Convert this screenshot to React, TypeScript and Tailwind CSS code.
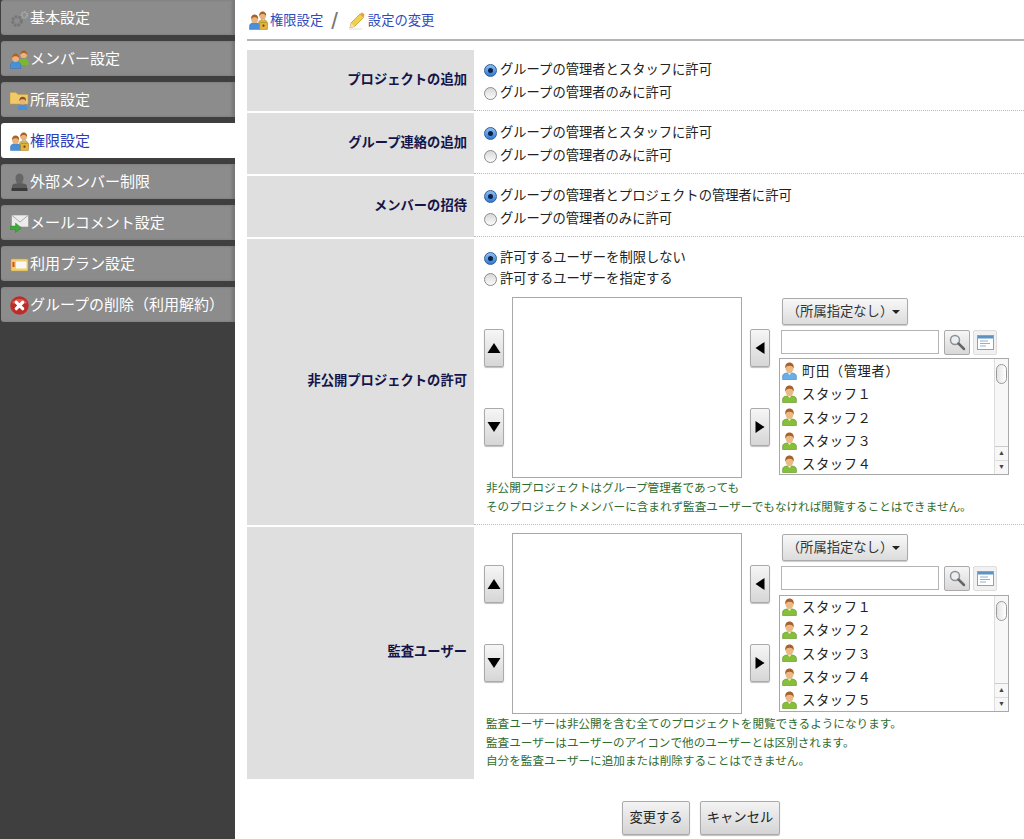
import React from "react";

const fontStack = "font-['Liberation_Sans','Noto_Sans_CJK_JP',sans-serif]";

function Person({ shirt = "#86bf3a", edge = "#5c8f22" }: { shirt?: string; edge?: string }) {
  return (
    <svg width="15" height="18" viewBox="0 0 15 18" className="mt-[-2px] shrink-0">
      <path d="M.6 17.500v-3.200c0-2.400 2.600-3.500 6.900-3.500s6.900 1.100 6.900 3.500v3.200z" fill={shirt} stroke={edge} strokeWidth="0.600" />
      <path d="M5.300 10.600h4.400l-2.200 2.400z" fill="#f6ead4" />
      <ellipse cx="7.500" cy="6" rx="4" ry="4.900" fill="#eab984" />
      <path d="M3.300 6.400C2.700 2.400 4.900.4 7.500.4s4.800 2 4.200 6C10.800 4.300 9.300 3.700 7.500 3.800c-1.800-.1-3.300.5-4.200 2.600z" fill="#a8612a" />
    </svg>
  );
}

function GroupIcon({ lock = false }: { lock?: boolean }) {
  return (
    <svg width="19" height="19" viewBox="0 0 19 19" className="shrink-0">
      <path d="M9 11.500c0-2 2-3 4.700-3s4.800 1 4.800 3V15H9z" fill={lock ? "#d9b24a" : "#7ab832"} />
      <circle cx="13.700" cy="4.700" r="3.400" fill="#e9b47c" />
      <path d="M10.400 4.900c-.5-3 1.400-4.500 3.300-4.500s3.800 1.500 3.300 4.500c-.8-1.500-1.900-1.900-3.300-1.900s-2.500.4-3.300 1.900z" fill="#a8612a" />
      <path d="M.4 18.500v-3.300c0-2.400 2.500-3.600 5.200-3.600s5.200 1.200 5.200 3.600v3.300z" fill="#4a90d9" stroke="#2d6bb0" strokeWidth="0.400" />
      <ellipse cx="5.600" cy="8" rx="3.500" ry="3.900" fill="#e9b47c" />
      <path d="M2.100 8.200C1.700 5 3.500 3.400 5.600 3.400s3.900 1.600 3.500 4.800C8.300 6.700 7.100 6.200 5.600 6.200s-2.700.5-3.500 2z" fill="#a8612a" />
      {lock && (
        <g>
          <path d="M12 11.500V10a2.200 2.200 0 0 1 4.400 0v1.500" fill="none" stroke="#b5ad8d" strokeWidth="1" />
          <rect x="10.500" y="11.500" width="8" height="7" rx="0.500" fill="#e3b23c" stroke="#a57b1c" strokeWidth="0.500" />
          <circle cx="14.500" cy="14.700" r="1.100" fill="#5d4410" />
        </g>
      )}
    </svg>
  );
}

function GearIcon() {
  return (
    <svg width="19" height="18" viewBox="0 0 19 18" className="shrink-0">
      <circle cx="7" cy="11" r="4.300" fill="none" stroke="#767676" strokeWidth="3" strokeDasharray="2.500 1" />
      <circle cx="14.500" cy="5" r="2.800" fill="none" stroke="#a9a9a9" strokeWidth="1.800" strokeDasharray="1.800 0.700" />
    </svg>
  );
}

function FolderIcon() {
  return (
    <svg width="19" height="19" viewBox="0 0 19 19" className="shrink-0">
      <path d="M0 1.500h6l2 2h10V13H0z" fill="#f0c968" stroke="#c99b3a" strokeWidth="0.500" />
      <path d="M8 19v-2c0-2.200 2-3.300 4.700-3.300s4.700 1.100 4.700 3.300v2z" fill="#4a90d9" />
      <ellipse cx="12.700" cy="10" rx="3.300" ry="3.600" fill="#e9b47c" />
      <path d="M9.400 10c-.4-2.800 1.300-4.300 3.300-4.300s3.700 1.500 3.300 4.300c-.8-1.300-1.900-1.700-3.300-1.700s-2.500.4-3.300 1.700z" fill="#8a5324" />
    </svg>
  );
}

function StampIcon() {
  return (
    <svg width="19" height="19" viewBox="0 0 19 19" className="shrink-0">
      <path d="M5.500 5c0-6 8-6 8 0 0 3-1.300 4-1.300 6H6.800c0-2-1.300-3-1.300-6z" fill="#666" />
      <path d="M2 13c0-1.500 2-2.500 4-2.500h7c2 0 4 1 4 2.500v2H2z" fill="#5c5c5c" />
      <rect x="1.500" y="15" width="16" height="3" fill="#3a3a3a" />
    </svg>
  );
}

function MailIcon() {
  return (
    <svg width="19" height="19" viewBox="0 0 19 19" className="shrink-0">
      <rect x="1.500" y="1" width="17" height="12" fill="#ececec" stroke="#8f8f8f" strokeWidth="0.600" />
      <path d="M1.500 1l8.500 7 8.500-7" fill="none" stroke="#9a9a9a" strokeWidth="0.800" />
      <path d="M0 12h5.500V9l6 4.800-6 4.800v-3H0z" fill="#3fa83a" stroke="#2a7d27" strokeWidth="0.400" />
    </svg>
  );
}

function PlanIcon() {
  return (
    <svg width="19" height="18" viewBox="0 0 19 18" className="shrink-0">
      <rect x="1" y="3" width="17" height="12" rx="1" fill="#f0cf6c" stroke="#c99b3a" strokeWidth="0.500" />
      <rect x="6" y="5.500" width="10.500" height="7" fill="#f7f7f7" />
      <rect x="2.500" y="6" width="2" height="5" fill="#d84a2a" />
    </svg>
  );
}

function RemoveIcon() {
  return (
    <svg width="19" height="19" viewBox="0 0 19 19" className="shrink-0">
      <circle cx="9.500" cy="9.500" r="9.200" fill="#bf2b27" />
      <path d="M2 7a8 6 0 0 1 15 0c-4 1.500-11 1.500-15 0z" fill="#de5a50" />
      <path d="M6.300 6.300l6.400 6.400M12.700 6.300l-6.400 6.400" stroke="#fff" strokeWidth="3.200" strokeLinecap="round" />
    </svg>
  );
}

function PencilIcon() {
  return (
    <svg width="17" height="18" viewBox="0 0 17 18" className="shrink-0">
      <path d="M3 11L12 2l3.500 3.500-9 9L2 16z" fill="#f2d04a" stroke="#b9932a" strokeWidth="0.700" />
      <path d="M12 2l1-1c.6-.5 1.400-.5 2 0l1 1c.5.600.5 1.400 0 2l-.5 1.500z" fill="#e9a23b" />
      <path d="M3 11l3.500 3.500L2 16z" fill="#f3dfb8" />
      <rect x="1" y="16.500" width="13" height="1" fill="#ddd" />
    </svg>
  );
}

const navItems = [
  { label: "基本設定", icon: <GearIcon /> },
  { label: "メンバー設定", icon: <GroupIcon /> },
  { label: "所属設定", icon: <FolderIcon /> },
  { label: "権限設定", icon: <GroupIcon lock />, active: true },
  { label: "外部メンバー制限", icon: <StampIcon /> },
  { label: "メールコメント設定", icon: <MailIcon /> },
  { label: "利用プラン設定", icon: <PlanIcon /> },
  { label: "グループの削除（利用解約）", icon: <RemoveIcon /> },
];

function Radio({ checked, label }: { checked?: boolean; label: string }) {
  return (
    <label className="flex items-center gap-[3px] text-[13.3px] leading-[18px] text-[#222]">
      <span
        className={
          checked
            ? "flex h-[13px] w-[13px] items-center justify-center rounded-full border border-[#2a5f9e] bg-gradient-to-b from-[#8fbdf0] to-[#2f7bd6]"
            : "h-[13px] w-[13px] rounded-full border border-[#8b8b8b] bg-gradient-to-b from-[#d8d8d8] to-[#fbfbfb]"
        }
      >
        {checked && <span className="h-[5px] w-[5px] rounded-full bg-[#0b2346]" />}
      </span>
      {label}
    </label>
  );
}

function ArrowButton({ dir }: { dir: "up" | "down" | "left" | "right" }) {
  const points = {
    up: "8,3 14.500,13 1.500,13",
    down: "1.500,3 14.500,3 8,13",
    left: "12.500,2 12.500,14 3.500,8",
    right: "3.500,2 3.500,14 12.500,8",
  }[dir];
  return (
    <button className="flex h-[38px] w-[20px] items-center justify-center rounded-[2px] border border-[#aaa] bg-gradient-to-b from-[#f6f6f6] to-[#d6d6d6] shadow-[0_1px_1px_rgba(0,0,0,0.25)]">
      <svg width="16" height="16" viewBox="0 0 16 16">
        <polygon points={points} fill="#000" />
      </svg>
    </button>
  );
}

function UserList({
  users,
  rowsClass,
}: {
  users: { name: string; admin?: boolean }[];
  rowsClass: string;
}) {
  return (
    <div className="relative ml-[-2px] h-[117px] w-[230px] overflow-hidden border border-[#a8a8a8] bg-white">
      <div className={`flex flex-col pl-[2px] ${rowsClass}`}>
        {users.map((u) => (
          <div key={u.name} className="flex h-[23.4px] items-center gap-[5px] text-[13.3px] text-[#222]">
            <Person shirt={u.admin ? "#6aaee8" : "#86bf3a"} edge={u.admin ? "#3d7fc0" : "#5c8f22"} />
            <span className="tracking-[0.6px]">{u.name}</span>
          </div>
        ))}
      </div>
      {/* scrollbar */}
      <div className="absolute top-0 right-0 flex h-full w-[14px] flex-col items-center border-l border-[#ddd] bg-[#f7f7f7]">
        <div className="mt-[5px] h-[20px] w-[11px] rounded-[6px] border border-[#999] bg-gradient-to-r from-[#e4e4e4] to-white" />
        <div className="flex-1" />
        <div className="flex h-[14px] w-full items-center justify-center border-t border-[#ccc] text-[7px] text-[#444]">▲</div>
        <div className="flex h-[14px] w-full items-center justify-center border-t border-[#ddd] text-[7px] text-[#444]">▼</div>
      </div>
    </div>
  );
}

function Picker({
  users,
  listClass = "mt-[4px]",
  rowsClass = "pt-px",
}: {
  users: { name: string; admin?: boolean }[];
  listClass?: string;
  rowsClass?: string;
}) {
  return (
    <div className="flex">
      <div className="flex w-[28px] flex-col gap-[41px] pt-[32px]">
        <ArrowButton dir="up" />
        <ArrowButton dir="down" />
      </div>
      <div className="h-[181px] w-[230px] border border-[#a8a8a8] bg-white" />
      <div className="ml-[8px] flex w-[31px] flex-col gap-[41px] pt-[32px]">
        <div className="w-[21px]">
          <ArrowButton dir="left" />
        </div>
        <div className="w-[21px]">
          <ArrowButton dir="right" />
        </div>
      </div>
      <div className="mt-px flex flex-col">
        <button className="ml-px flex h-[27px] w-[126px] items-center justify-center rounded-[2px] border border-[#aaa] bg-gradient-to-b from-[#f8f8f8] to-[#dcdcdc] text-[13.3px] text-[#333] shadow-[0_1px_1px_rgba(0,0,0,0.2)]">
          <span className="mr-[-1px]">（所属指定なし）</span>
          <span className="mr-[3px] h-0 w-0 border-x-[4px] border-t-[4px] border-x-transparent border-t-[#222]" />
        </button>
        <div className="mt-[5px] flex h-[24px] items-center">
          <div className="h-[24px] w-[158px] border border-[#b5b5b5] bg-white" />
          <button className="ml-[5px] flex h-[25px] w-[26px] items-center justify-center rounded-[2px] border border-[#aaa] bg-gradient-to-b from-[#f6f6f6] to-[#d8d8d8]">
            <svg width="18" height="18" viewBox="0 0 18 18">
              <circle cx="7" cy="7" r="4.500" fill="#e9eef3" stroke="#8f8f8f" strokeWidth="1.500" />
              <path d="M10.500 10.500L16 16" stroke="#666" strokeWidth="2.500" strokeLinecap="round" />
            </svg>
          </button>
          <button className="ml-[3px] flex h-[25px] w-[24px] items-center justify-center rounded-[2px] border border-[#ddd] bg-[#f1f1f1]">
            <svg width="17" height="15" viewBox="0 0 17 15">
              <rect x="0.500" y="0.500" width="16" height="14" fill="#fff" stroke="#8aa3b8" />
              <rect x="1" y="1" width="15" height="2.500" fill="#5b93c2" />
              <path d="M3 6h8M3 8.500h10M3 11h6" stroke="#8db3d3" strokeWidth="1.200" />
            </svg>
          </button>
        </div>
        <div className={listClass}>
          <UserList users={users} rowsClass={rowsClass} />
        </div>
      </div>
    </div>
  );
}

function Row({
  label,
  className,
  children,
}: {
  label: string;
  className: string;
  children: React.ReactNode;
}) {
  return (
    <div className={`flex ${className}`}>
      <div className="flex w-[227px] shrink-0 items-center justify-end bg-[#dfdfdf] pr-[7px] pb-[2px] text-[13.3px] font-bold text-[#14144a]">
        {label}
      </div>
      <div className="min-w-0 flex-1 border-b border-dotted border-[#bbb] pl-[10px]">{children}</div>
    </div>
  );
}

function Note({ lines }: { lines: string[] }) {
  return (
    <div className="mt-px pl-[2px] text-[11.6px] leading-[18.6px] text-[#2f6b2f]">
      {lines.map((l) => (
        <div key={l}>{l}</div>
      ))}
    </div>
  );
}

export default function App() {
  const firstUsers = [
    { name: "町田（管理者）", admin: true },
    { name: "スタッフ１" },
    { name: "スタッフ２" },
    { name: "スタッフ３" },
    { name: "スタッフ４" },
  ];
  const secondUsers = [
    { name: "スタッフ１" },
    { name: "スタッフ２" },
    { name: "スタッフ３" },
    { name: "スタッフ４" },
    { name: "スタッフ５" },
  ];

  return (
    <div className={`flex h-[839px] w-[1024px] overflow-hidden bg-white ${fontStack}`}>
      <aside className="h-full w-[235px] shrink-0 bg-[#3f3f3f]">
        <nav className="flex flex-col gap-[6px]">
          {navItems.map((item) => (
            <div
              key={item.label}
              className={
                item.active
                  ? "ml-px flex h-[35px] items-center gap-px rounded-l-[3px] bg-white pt-[2px] pl-[9px] text-[15px] text-[#2a3ab8]"
                  : "ml-px flex h-[35px] items-center gap-px rounded-l-[3px] bg-[#8c8c8c] pt-[2px] pl-[9px] text-[15px] text-white shadow-[inset_-3px_0_3px_rgba(0,0,0,0.15)]"
              }
            >
              <span className="flex w-[19px] justify-center">{item.icon}</span>
              {item.label}
            </div>
          ))}
        </nav>
      </aside>

      <main className="min-w-0 flex-1 pl-[12px]">
        <div className="flex h-[41px] items-center gap-[2px] border-b-2 border-[#b4b4b4] pt-[2px] pl-[2px] text-[13.3px] text-[#2f4ab8]">
          <GroupIcon lock />
          <span>権限設定</span>
          <span className="mr-[8px] ml-[6px] text-[24px] leading-none font-light text-[#777]">/</span>
          <PencilIcon />
          <span className="ml-px">設定の変更</span>
        </div>

        <div className="mt-[9px] flex flex-col gap-[2px]">
          <Row label="プロジェクトの追加" className="h-[61px]">
            <div className="flex flex-col gap-[5px] pt-[11px]">
              <Radio checked label="グループの管理者とスタッフに許可" />
              <Radio label="グループの管理者のみに許可" />
            </div>
          </Row>
          <Row label="グループ連絡の追加" className="h-[61px]">
            <div className="flex flex-col gap-[5px] pt-[11px]">
              <Radio checked label="グループの管理者とスタッフに許可" />
              <Radio label="グループの管理者のみに許可" />
            </div>
          </Row>
          <Row label="メンバーの招待" className="h-[61px]">
            <div className="flex flex-col gap-[5px] pt-[11px]">
              <Radio checked label="グループの管理者とプロジェクトの管理者に許可" />
              <Radio label="グループの管理者のみに許可" />
            </div>
          </Row>
          <Row label="非公開プロジェクトの許可" className="h-[286px]">
            <div className="flex flex-col gap-[3px] pt-[10px] pb-[9px]">
              <Radio checked label="許可するユーザーを制限しない" />
              <Radio label="許可するユーザーを指定する" />
            </div>
            <Picker users={firstUsers} />
            <Note
              lines={[
                "非公開プロジェクトはグループ管理者であっても",
                "そのプロジェクトメンバーに含まれず監査ユーザーでもなければ閲覧することはできません。",
              ]}
            />
          </Row>
          <div className="flex h-[252px]">
            <div className="flex w-[227px] shrink-0 items-center justify-end bg-[#dfdfdf] pr-[7px] pb-[2px] text-[13.3px] font-bold text-[#14144a]">
              監査ユーザー
            </div>
            <div className="min-w-0 flex-1 pt-[6px] pl-[10px]">
              <Picker users={secondUsers} listClass="mt-[5px]" rowsClass="pt-0" />
              <Note
                lines={[
                  "監査ユーザーは非公開を含む全てのプロジェクトを閲覧できるようになります。",
                  "監査ユーザーはユーザーのアイコンで他のユーザーとは区別されます。",
                  "自分を監査ユーザーに追加または削除することはできません。",
                ]}
              />
            </div>
          </div>
        </div>

        <div className="mt-[22px] flex gap-[10px] pl-[375px]">
          <button className="h-[34px] w-[68px] rounded-[2px] border border-[#aaa] bg-gradient-to-b from-[#f4f4f4] to-[#d4d4d4] text-[13.3px] text-[#222] shadow-[0_1px_1px_rgba(0,0,0,0.25)]">
            変更する
          </button>
          <button className="h-[34px] w-[80px] rounded-[2px] border border-[#aaa] bg-gradient-to-b from-[#f4f4f4] to-[#d4d4d4] text-[13.3px] text-[#222] shadow-[0_1px_1px_rgba(0,0,0,0.25)]">
            キャンセル
          </button>
        </div>
      </main>
    </div>
  );
}
